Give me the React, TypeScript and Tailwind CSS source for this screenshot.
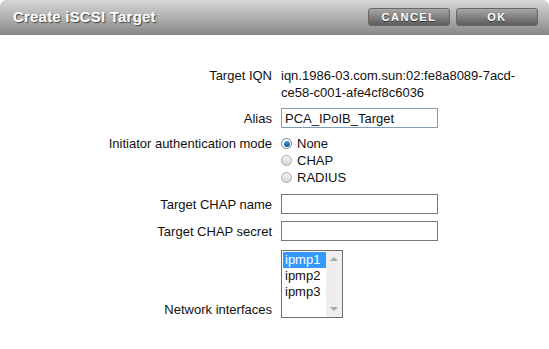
import React from "react";

const Radio = ({ checked, label }: { checked?: boolean; label: string }) => (
  <label className="flex items-center h-[17px] gap-[5px]">
    <span
      className={
        checked
          ? "w-[11px] h-[11px] rounded-full border border-[#6e7f8f] bg-white flex items-center justify-center"
          : "w-[11px] h-[11px] rounded-full border border-[#a8a8a8] bg-gradient-to-b from-[#f4f4f4] to-[#d6d6d6]"
      }
    >
      {checked && <span className="w-[6px] h-[6px] rounded-full bg-gradient-to-b from-[#4aa3e6] to-[#0d4f8e]" />}
    </span>
    <span>{label}</span>
  </label>
);

const Row = ({
  label,
  children,
  align = "items-start",
  className = "",
}: {
  label: string;
  children: React.ReactNode;
  align?: string;
  className?: string;
}) => (
  <div className={`flex ${align} gap-[9px] ${className}`}>
    <div className="w-[272px] text-right shrink-0 leading-[17px]">{label}</div>
    <div>{children}</div>
  </div>
);

export default function App() {
  return (
    <div
      className="w-[549px] h-[349px] bg-white text-[13px] text-[#111] overflow-hidden"
      style={{ fontFamily: '"Liberation Sans", Arial, sans-serif' }}
    >
      {/* Titlebar */}
      <div className="h-[35px] rounded-t-[6px] bg-gradient-to-b from-[#d6d6d6] via-[#b0b0b0] to-[#888888] flex items-center justify-between pl-[13px] pr-[11px]">
        <h1 className="text-white font-bold text-[15px] [text-shadow:1px_1px_1px_#444] tracking-[0.2px]">
          Create iSCSI Target
        </h1>
        <div className="flex gap-[6px] -mt-[1px]">
          {["CANCEL", "OK"].map((b) => (
            <button
              key={b}
              className="w-[82px] h-[18px] rounded-[3px] border border-[#666] bg-gradient-to-b from-[#a8a8a8] to-[#5c5c5c] text-white font-bold text-[11px] tracking-[1.5px] leading-none [text-shadow:0_1px_0_#333]"
            >
              {b}
            </button>
          ))}
        </div>
      </div>

      {/* Form */}
      <div className="pt-[32px] flex flex-col">
        <Row label="Target IQN">
          <div className="leading-[17px] w-[250px]">
            iqn.1986-03.com.sun:02:fe8a8089-7acd-
            <br />
            ce58-c001-afe4cf8c6036
          </div>
        </Row>

        <Row label="Alias" align="items-center" className="mt-[7px]">
          <input
            defaultValue="PCA_IPoIB_Target"
            className="w-[157px] h-[20px] border border-[#7f9db9] px-[3px] text-[13px] outline-none"
          />
        </Row>

        <Row label="Initiator authentication mode" className="mt-[7px]">
          <div className="flex flex-col">
            <Radio checked label="None" />
            <Radio label="CHAP" />
            <Radio label="RADIUS" />
          </div>
        </Row>

        <Row label="Target CHAP name" align="items-center" className="mt-[8px]">
          <input className="w-[157px] h-[20px] border border-[#7a7a7a] outline-none" />
        </Row>

        <Row label="Target CHAP secret" align="items-center" className="mt-[7px]">
          <input className="w-[157px] h-[20px] border border-[#7a7a7a] outline-none" />
        </Row>

        <Row label="Network interfaces" align="items-end" className="mt-[9px]">
          <div className="w-[62px] h-[68px] border border-[#6f6f6f] flex">
            <div className="flex-1 pt-[1px] pl-[1px] leading-[16px]">
              <div className="bg-[#3399ff] text-white pl-[2px]">ipmp1</div>
              <div className="pl-[2px]">ipmp2</div>
              <div className="pl-[2px]">ipmp3</div>
            </div>
            <div className="w-[16px] bg-[#efedf0] flex flex-col justify-between items-center py-[6px]">
              <span className="w-0 h-0 border-x-[4px] border-x-transparent border-b-[4px] border-b-[#a8a8a8]" />
              <span className="w-0 h-0 border-x-[4px] border-x-transparent border-t-[4px] border-t-[#a8a8a8]" />
            </div>
          </div>
        </Row>
      </div>
    </div>
  );
}
